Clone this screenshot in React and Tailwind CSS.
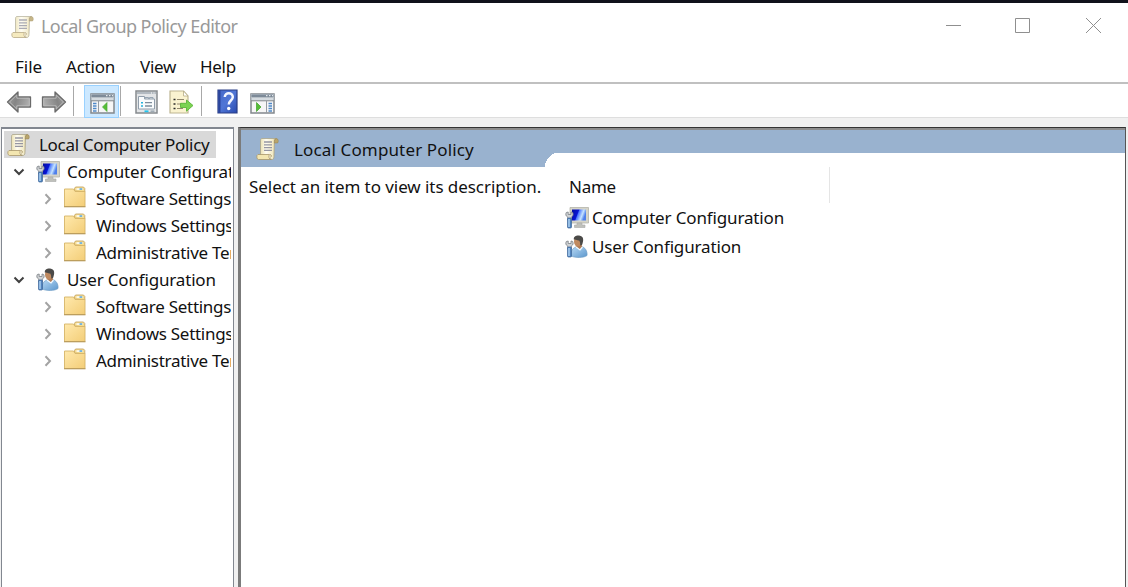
import React from "react";

const font = "font-['Noto_Sans','Open_Sans',sans-serif]";

function Scroll({ className = "" }) {
  return (
    <svg className={`shrink-0 ${className}`} width="24" height="24" viewBox="0 0 24 24">
      <defs>
        <linearGradient id="paper" x1="0" x2="1">
          <stop offset="0" stopColor="#ebe1b2" />
          <stop offset=".35" stopColor="#fffdf2" />
          <stop offset=".75" stopColor="#f3ebc8" />
          <stop offset="1" stopColor="#c9b67a" />
        </linearGradient>
      </defs>
      <path d="M5.500 1.500h15c-1.500.700-2 2-2 4.500L18 19.500c0 2-1 3-2 3L4.500 19V5c0-1.500 0-3 1-3.500z" fill="url(#paper)" stroke="#aaa48c" strokeWidth=".8" />
      <path d="M20.300 1.500c-1.800 0-2 2.500-2 4.500h3.300c1.200-1.500.700-4.500-1.300-4.500z" fill="#b9a56c" stroke="#95804f" strokeWidth=".5" />
      <path d="M2 17.500h11.500c-1.300 1.500-.500 5 1.800 5H2.500c-2 0-2.300-4.500-.500-5z" fill="#f3e6b0" stroke="#a8966a" strokeWidth=".8" />
      <path d="M14 17.500c1.800.300 1.800 2.500.300 2.800" fill="none" stroke="#a08d5a" strokeWidth=".8" />
      <path d="M8 5h8M8 7.800h8M8 10.600h8M8 13.400h8" stroke="#9696a2" strokeWidth="1.300" />
    </svg>
  );
}

function Wrench() {
  return (
    <g>
      <path d="M1.300 6.500c-1 2-.500 3.500 1.400 4.500v3h3.600v-3c1.800-1 2.300-2.500 1.400-4.500L6 6v2.500H3.200V6z" fill="#cfd2d4" stroke="#7b8085" strokeWidth=".8" />
      <rect x="2.500" y="12" width="4" height="10" rx="1" fill="#5183bd" stroke="#3c659a" strokeWidth=".7" />
      <path d="M4 13v8" stroke="#c4e4ff" strokeWidth="1.200" />
    </g>
  );
}

function Computer() {
  return (
    <svg width="24" height="24" viewBox="0 0 24 24" className="shrink-0">
      <defs>
        <linearGradient id="screen" x1="0" y1="0" x2="1" y2=".3">
          <stop offset="0" stopColor="#0510a0" />
          <stop offset=".45" stopColor="#0714d4" />
          <stop offset=".52" stopColor="#4c78ff" />
          <stop offset=".8" stopColor="#c5e3ff" />
          <stop offset="1" stopColor="#4f80ec" />
        </linearGradient>
      </defs>
      <path d="M5 1.500h18.500v15.500H5z" fill="#d5d4c9" stroke="#b4b4aa" strokeWidth=".8" />
      <path d="M7 3.500h14v11H7z" fill="url(#screen)" />
      <path d="M12 17h5v2h3v2.500H9.500V19H12z" fill="#bfc0bb" stroke="#a8aaa7" strokeWidth=".6" />
      <Wrench />
    </svg>
  );
}

function User() {
  return (
    <svg width="24" height="24" viewBox="0 0 24 24" className="shrink-0">
      <defs>
        <linearGradient id="shirt" x1="0" x2="1" y2="1">
          <stop offset="0" stopColor="#b9daf5" />
          <stop offset="1" stopColor="#5c97cd" />
        </linearGradient>
      </defs>
      <path d="M6 21c0-6 2-8.500 6-9l4-.500c4 .500 6.500 4.500 6 9-3 2.500-12 2.500-16 .500z" fill="url(#shirt)" stroke="#6c9bc4" strokeWidth=".7" />
      <path d="M10.500 11l4.500 3.500 2-3-.500-3h-5z" fill="#b27c54" />
      <ellipse cx="12.800" cy="6.500" rx="3.800" ry="5" fill="#c08a60" />
      <path d="M8.800 4.500C8.500 1 12 .200 15 .800c4 .700 3.700 5 2 9.200l-1.800.500c0-2 0-3.500-1-5C12.500 5.500 10.500 4 8.800 4.500z" fill="#4b4a48" />
      <path d="M11 12l4 3 2.500-3" fill="none" stroke="#f3faff" strokeWidth="1.200" />
      <Wrench />
    </svg>
  );
}

function Folder() {
  return (
    <svg width="24" height="22" viewBox="0 0 24 22" className="shrink-0">
      <defs>
        <linearGradient id="folder" x1="0" x2="1" y2="1">
          <stop offset="0" stopColor="#ffe9ad" />
          <stop offset="1" stopColor="#f3cd77" />
        </linearGradient>
      </defs>
      <path d="M11.500 5V2.500l1-1.500h8l1.300 1.500V6z" fill="#f4dc91" stroke="#c7a664" strokeWidth=".9" />
      <path d="M13.500 2.300h6v1.500h-6z" fill="#fff" />
      <path d="M16.500 2.300h2.700v1.500h-2.700z" fill="#4fa3dd" />
      <path d="M1.500 3h9l1.500 2.500H22V20.500H1.500z" fill="url(#folder)" stroke="#d6b468" strokeWidth=".9" />
      <path d="M1 20.700h21.500" stroke="#b99b5c" strokeWidth="1.200" />
    </svg>
  );
}

function Arrow({ flip }) {
  return (
    <svg width="26" height="24" viewBox="0 0 26 24" className={flip ? "-scale-x-100" : ""}>
      <defs>
        <linearGradient id="arrow" x1="0" x2="1" y1="0" y2=".3">
          <stop offset="0" stopColor="#a8a8a8" />
          <stop offset=".45" stopColor="#858585" />
          <stop offset="1" stopColor="#adadad" />
        </linearGradient>
      </defs>
      <path d="M1.500 12L12 2v5h12.500v10H12v5z" fill="url(#arrow)" stroke="#6b6b6b" strokeWidth="1.300" strokeLinejoin="round" />
      <path d="M3.500 12l7.300-7v3.200h12.500v7.600H10.800V19z" fill="none" stroke="#bdbdbd" strokeWidth=".9" />
    </svg>
  );
}

function PaneIcon({ flip }) {
  return (
    <svg width="25" height="21" viewBox="0 0 25 21">
      <path d="M1 1h23v19H1z" fill="#f6f6f6" stroke="#83888d" strokeWidth="1.500" />
      <path d="M1 1h23v6.500H1z" fill="#b8c0c7" />
      <path d="M1.500 1.500h22v2.500h-22z" fill="#7d8a98" />
      <path d="M2 6h21" stroke="#dfe4e8" strokeWidth="1.500" />
      <path d="M16 2.700h1.500M19 2.700h1.500M22 2.700h1" stroke="#fff" />
      <path d="M1 7.800h23" stroke="#858a8f" />
      {flip ? (
        <>
          <path d="M16.500 8v12" stroke="#979ca1" />
          <path d="M18.500 10.500h3.500M18.500 13h3.500M18.500 15.500h3.500M18.500 18h3.500" stroke="#5089c8" strokeWidth="1.300" />
          <path d="M6.500 9.500l4.500 4.500-4.500 4.500z" fill="#55be36" stroke="#3f9f29" strokeWidth=".7" />
        </>
      ) : (
        <>
          <path d="M8.500 8v12" stroke="#979ca1" />
          <path d="M3 10.500h3.500M3 13h3.500M3 15.500h3.500M3 18h3.500" stroke="#5089c8" strokeWidth="1.300" />
          <path d="M17 9.500l-4.500 4.500 4.500 4.500z" fill="#55be36" stroke="#4aa936" strokeWidth=".7" />
        </>
      )}
    </svg>
  );
}

function Properties() {
  return (
    <svg width="23" height="24" viewBox="0 0 23 24">
      <path d="M1 1h21v22H1z" fill="#e3e5e7" stroke="#868a8e" strokeWidth="1.500" />
      <path d="M2 3h19" stroke="#b3bac1" strokeWidth="2" />
      <path d="M16 3h1M18.500 3h1" stroke="#fff" strokeWidth="1.200" />
      <path d="M3.500 9V6.500h6V9h10v10h-16z" fill="#fafcfd" stroke="#919eab" />
      <path d="M10 9V7.500h3.500V9M14.500 9V7.500H18V9" fill="none" stroke="#97a5b3" />
      <path d="M6 12.700h2M6 16h2" stroke="#24b3dc" strokeWidth="1.500" />
      <path d="M10 12.700h7M10 16h7" stroke="#7e8d9c" strokeWidth="1.300" />
      <path d="M9.500 21.300h4" stroke="#23c5ef" strokeWidth="1.800" />
      <path d="M15.500 21.300h4" stroke="#a0abb5" strokeWidth="1.800" />
    </svg>
  );
}

function Export() {
  return (
    <svg width="25" height="24" viewBox="0 0 25 24">
      <path d="M1 1h13.500l4.500 5v17H1z" fill="#faf3d0" stroke="#bdb592" strokeWidth="1.200" />
      <path d="M14.500 1v5H19z" fill="#fff" stroke="#b7ad87" strokeWidth=".8" />
      <path d="M4.500 9.500h2M4.500 14h2M4.500 18.500h2" stroke="#2d2d2a" strokeWidth="1.700" />
      <path d="M8 9.500h7M8 14h5M8 18.500h6" stroke="#91876c" strokeWidth="1.200" />
      <path d="M11.500 13.300h6V10l6.500 5.500-6.500 5.700v-3.700h-6z" fill="#7bd351" stroke="#5bb43a" strokeWidth=".9" />
    </svg>
  );
}

function Help() {
  return (
    <svg width="21" height="25" viewBox="0 0 21 25">
      <defs>
        <linearGradient id="help" x1="0" x2="1" y2="1">
          <stop offset="0" stopColor="#4468c8" />
          <stop offset=".5" stopColor="#5076d6" />
          <stop offset="1" stopColor="#2849ae" />
        </linearGradient>
      </defs>
      <path d="M1 1h19v23H1z" fill="url(#help)" stroke="#2a3e86" strokeWidth="1.200" />
      <path d="M2.500 1v23" stroke="#2b459c" strokeWidth="2" />
      <path d="M7.800 8c0-5 8-5 8 0 0 3.500-4 3.500-4 7.500" fill="none" stroke="#f3f6ff" strokeWidth="2.500" />
      <circle cx="11.700" cy="19.500" r="1.700" fill="#fff" />
    </svg>
  );
}

function Chevron({ open }) {
  return open ? (
    <svg width="12" height="8" viewBox="0 0 12 8"><path d="M1.500 1.500L6 6l4.500-4.500" fill="none" stroke="#404040" strokeWidth="2" /></svg>
  ) : (
    <svg width="8" height="12" viewBox="0 0 8 12"><path d="M1.500 1.300L6 6l-4.500 4.700" fill="none" stroke="#a3a3a3" strokeWidth="2" /></svg>
  );
}

function Branch({ icon, label }) {
  return (
    <>
      <div className="flex h-[27px] items-center">
        <span className="flex w-[34px] shrink-0 justify-center"><Chevron open /></span>
        {icon}
        <span className="ml-[7px] tracking-[-0.17px]">{label}</span>
      </div>
      {["Software Settings", "Windows Settings", "Administrative Templates"].map((child) => (
        <div key={child} className="flex h-[27px] items-center">
          <span className="flex w-[61px] shrink-0 justify-end pr-[11px]"><Chevron /></span>
          <span className="shrink-0 pb-[3px]"><Folder /></span>
          <span className="ml-[9px] tracking-[-0.28px]">{child}</span>
        </div>
      ))}
    </>
  );
}

export default function App() {
  return (
    <div className={`${font} flex h-[587px] w-[1128px] flex-col overflow-hidden whitespace-nowrap bg-[#f0f0f0] text-[17px] leading-[27px] text-[#111]`}>
      <header className="flex h-[50px] shrink-0 items-center border-t-[3px] border-[#10121b] bg-white pl-[11px]">
        <Scroll className="opacity-80" />
        <span className="ml-[6px] text-[18px] tracking-[-0.56px] text-[#999]">Local Group Policy Editor</span>
        <div className="ml-auto flex items-center pb-[2px] pr-[27px] text-[#8f8f8f]">
          <svg width="15" height="15" viewBox="0 0 15 15" className="mr-[54px]"><path d="M0 7.500h15" stroke="currentColor" /></svg>
          <svg width="15" height="15" viewBox="0 0 15 15" className="mr-[56px]"><path d="M.5.5h14v14H.5z" fill="none" stroke="currentColor" /></svg>
          <svg width="15" height="15" viewBox="0 0 15 15"><path d="M0 0l15 15M15 0l-15 15" stroke="currentColor" /></svg>
        </div>
      </header>
      <nav className="flex h-[32px] shrink-0 items-center bg-white">
        <span className="ml-[15px] w-[51px]">File</span>
        <span className="w-[74px] tracking-[-0.2px]">Action</span>
        <span className="w-[60px] tracking-[-0.3px]">View</span>
        <span className="tracking-[-0.3px]">Help</span>
      </nav>
      <div className="flex h-[36px] shrink-0 items-center border-b border-t-2 border-b-[#dedede] border-t-[#c0c0c0] bg-white pt-px">
        <span className="ml-[6px] pt-[2px]"><Arrow /></span>
        <span className="ml-[9px] pt-[2px]"><Arrow flip /></span>
        <span className="ml-[6px] h-[30px] w-px bg-[#a8a8a8]" />
        <span className="ml-[10px] flex h-[33px] w-[35px] items-center justify-center border border-[#99d1ff] bg-[#cce8ff] pl-px pt-1"><PaneIcon /></span>
        <span className="ml-px h-[30px] w-px bg-[#a8a8a8]" />
        <span className="ml-[14px] pt-px"><Properties /></span>
        <span className="ml-[11px] pt-px"><Export /></span>
        <span className="ml-[7px] h-[30px] w-px bg-[#a8a8a8]" />
        <span className="ml-[15px]"><Help /></span>
        <span className="ml-[12px] pt-[5px]"><PaneIcon flip /></span>
      </div>
      <main className="mt-[6px] flex min-h-0 flex-1 pt-[3px]">
        <aside className="ml-px w-[233px] shrink-0 overflow-hidden border-x border-t-2 border-[#828790] bg-white pr-[2px]">
          <div className="h-full overflow-hidden pt-[2px]">
            <div className="ml-[2px] flex h-[27px] w-[212px] items-center bg-[#d9d9d9] pl-[3px]">
              <Scroll />
              <span className="ml-[8px] tracking-[-0.31px]">Local Computer Policy</span>
            </div>
            <Branch icon={<Computer />} label="Computer Configuration" />
            <Branch icon={<User />} label="User Configuration" />
          </div>
        </aside>
        <section className="ml-[4px] flex w-[888px] shrink-0 flex-col border-l-[3px] border-r border-t border-l-[#7b7b7b] border-r-[#555] border-t-[#333] bg-white">
          <div className="flex h-[39px] shrink-0 border-t-2 border-[#8c8c8c] bg-[#99b2cf]">
            <div className="flex w-[304px] items-center pl-[15px] pt-px">
              <Scroll />
              <span className="ml-[14px] tracking-[0.14px]">Local Computer Policy</span>
            </div>
            <svg width="12" height="15" viewBox="0 0 12 15" className="mt-[22px]"><path d="M0 15v-4h1V9h1V7h1V6h1V5h1V4h1V3h1V2h2V1h3v14z" fill="#fff" /></svg>
            <div className="mt-[23px] flex-1 bg-white" />
          </div>
          <div className="flex">
            <p className="w-[320px] pl-[8px] pt-[6px] tracking-[-0.06px]">Select an item to view its description.</p>
            <div className="flex-1 pl-[4px]">
              <div className="flex h-[36px] w-[265px] items-center border-r border-[#e5e5e5] pl-[4px] pt-[3px] tracking-[-0.25px]">Name</div>
              <div className="flex h-[29px] items-center"><Computer /><span className="ml-[3px] tracking-[-0.15px]">Computer Configuration</span></div>
              <div className="flex h-[29px] items-center"><User /><span className="ml-[3px] tracking-[-0.15px]">User Configuration</span></div>
            </div>
          </div>
        </section>
      </main>
    </div>
  );
}
